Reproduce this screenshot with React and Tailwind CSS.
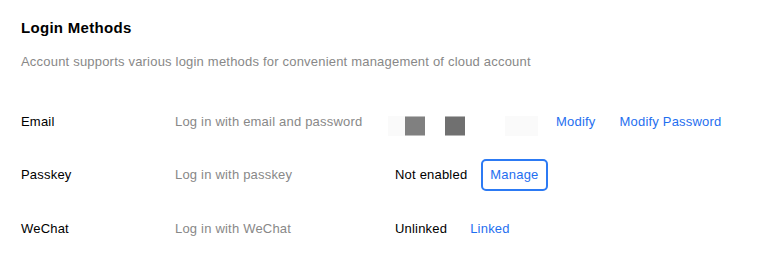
import React from 'react';

const rows = [
  { key: 'email', name: 'Email', desc: 'Log in with email and password' },
  { key: 'passkey', name: 'Passkey', desc: 'Log in with passkey' },
  { key: 'wechat', name: 'WeChat', desc: 'Log in with WeChat' },
];

const MaskedEmail = () => (
  <div className="flex items-stretch h-[20px] mt-[8px]">
    <div className="w-[17px] bg-[#fafafa]" />
    <div className="w-[20px] bg-[#808080] border-y border-[#bdbdbd]" />
    <div className="w-[20px] bg-white" />
    <div className="w-[20px] bg-[#707070] border-y border-[#b5b5b5]" />
    <div className="w-[40px] bg-white" />
    <div className="w-[33px] bg-[#fafafa]" />
  </div>
);

const Status = ({ type }) => {
  if (type === 'email') {
    return (
      <div className="flex items-center">
        <MaskedEmail />
        <a className="ml-[18px] text-[#1f6ff0] cursor-pointer">Modify</a>
        <a className="ml-[24px] text-[#1f6ff0] cursor-pointer">Modify Password</a>
      </div>
    );
  }
  if (type === 'passkey') {
    return (
      <div className="flex items-center pl-[7px]">
        <span className="text-black">Not enabled</span>
        <button className="ml-[14px] px-[7px] py-[4px] border-2 border-[#2c7af4] rounded-[5px] text-[#1f6ff0] leading-[20px] tracking-[0.2px]">
          Manage
        </button>
      </div>
    );
  }
  return (
    <div className="flex items-center pl-[7px]">
      <span className="text-black">Unlinked</span>
      <button className="ml-[14px] px-[7px] py-[4px] border-2 border-transparent text-[#1f6ff0] leading-[20px] tracking-[0.2px]">
        Linked
      </button>
    </div>
  );
};

export default function App() {
  return (
    <div className="w-[769px] h-[272px] bg-white pl-[21px] pt-[18px] font-['Liberation_Sans',Arial,sans-serif] text-[13px] leading-[20px] tracking-[0.2px]">
      {/* Header */}
      <h2 className="text-[15px] font-bold text-black leading-[20px] tracking-[0.3px]">Login Methods</h2>
      <p className="mt-[14px] text-[#888888]">
        Account supports various login methods for convenient management of cloud account
      </p>

      {/* Methods */}
      <div className="mt-[23px]">
        {rows.map((row) => (
          <div key={row.key} className="flex items-center h-[53.5px]">
            <div className="w-[154px] text-black">{row.name}</div>
            <div className="w-[213px] text-[#888888]">{row.desc}</div>
            <Status type={row.key} />
          </div>
        ))}
      </div>
    </div>
  );
}
